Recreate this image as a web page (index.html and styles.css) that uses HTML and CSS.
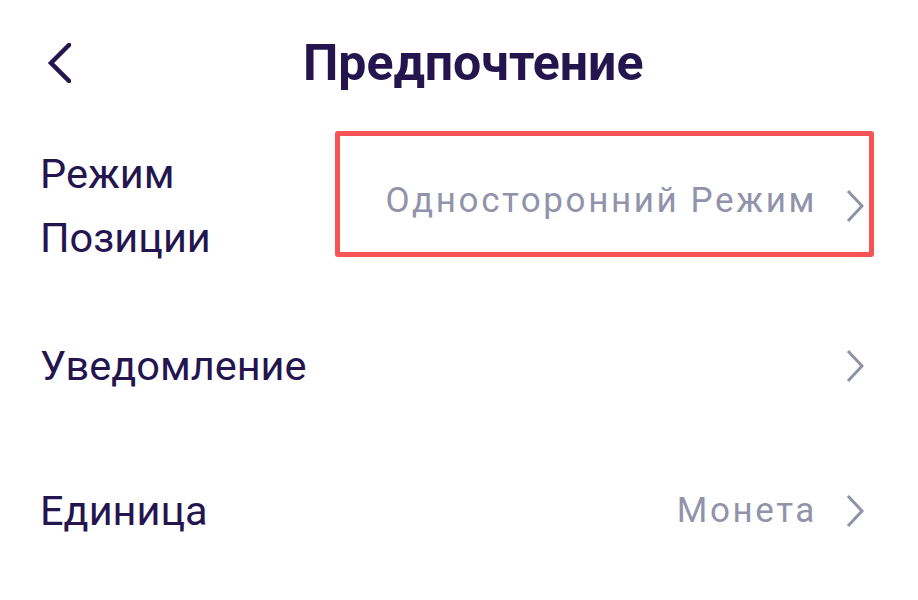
FILE: index.html
```html
<!DOCTYPE html>
<html lang="ru">
<head>
<meta charset="UTF-8" />
<meta name="viewport" content="width=device-width, initial-scale=1" />
<title>Предпочтение</title>
<link rel="stylesheet" href="styles.css">
</head>
<body>
  <div class="screen">
    <header class="topbar">
      <button class="back" aria-label="Назад">
        <svg width="24" height="40" viewBox="0 0 24 40"><path d="M22 2 L4 20 L22 38" fill="none" stroke="currentColor" stroke-width="4.5" stroke-linecap="square"/></svg>
      </button>
      <h1 class="title">Предпочтение</h1>
    </header>

    <div class="row row-tall">
      <span class="label label-wrap">Режим Позиции</span>
      <span class="value value-raised">Односторонний Режим</span>
      <svg class="chev" width="18" height="34" viewBox="0 0 18 34"><path d="M2 2 L16 17 L2 32" fill="none" stroke="currentColor" stroke-width="3"/></svg>
      <div class="highlight"></div>
    </div>

    <div class="row">
      <span class="label">Уведомление</span>
      <svg class="chev" width="18" height="34" viewBox="0 0 18 34"><path d="M2 2 L16 17 L2 32" fill="none" stroke="currentColor" stroke-width="3"/></svg>
    </div>

    <div class="row">
      <span class="label">Единица</span>
      <span class="value">Монета</span>
      <svg class="chev" width="18" height="34" viewBox="0 0 18 34"><path d="M2 2 L16 17 L2 32" fill="none" stroke="currentColor" stroke-width="3"/></svg>
    </div>
  </div>
</body>
</html>
```

FILE: styles.css
```css
html, body {
  margin: 0; padding: 0;
  background: #fff;
  font-family: Roboto, "Noto Sans", sans-serif;
  color: #24154f;
}
.screen {
  width: 918px;
  height: 600px;
  overflow: hidden;
}
.topbar {
  display: flex;
  align-items: center;
  height: 118px;
  padding: 7px 0 0 47px;
  box-sizing: border-box;
}
.back {
  display: flex;
  padding: 0;
  border: none;
  background: none;
  color: #24154f;
  cursor: pointer;
}
.title {
  margin: 0 0 0 232px;
  font-size: 50px;
  font-weight: 700;
  line-height: 1;
}
.row {
  position: relative;
  display: flex;
  align-items: center;
  height: 145px;
  padding: 0 54px 0 40px;
  box-sizing: border-box;
}
.row-tall {
  height: 175px;
}
.label {
  flex: 1;
  font-size: 41.5px;
  line-height: 64px;
}
.label-wrap {
  flex: 0 0 200px;
  margin-right: auto;
}
.value {
  font-size: 35px;
  color: #9193ab;
  letter-spacing: 2.6px;
  margin-right: 29px;
}
.value-raised {
  margin-bottom: 10px;
}
.chev {
  color: #8f91a8;
  flex: none;
}
.highlight {
  position: absolute;
  left: 335px;
  top: 13px;
  width: 539px;
  height: 126px;
  box-sizing: border-box;
  border: 5px solid #f75456;
  border-radius: 3px;
  pointer-events: none;
}
```
